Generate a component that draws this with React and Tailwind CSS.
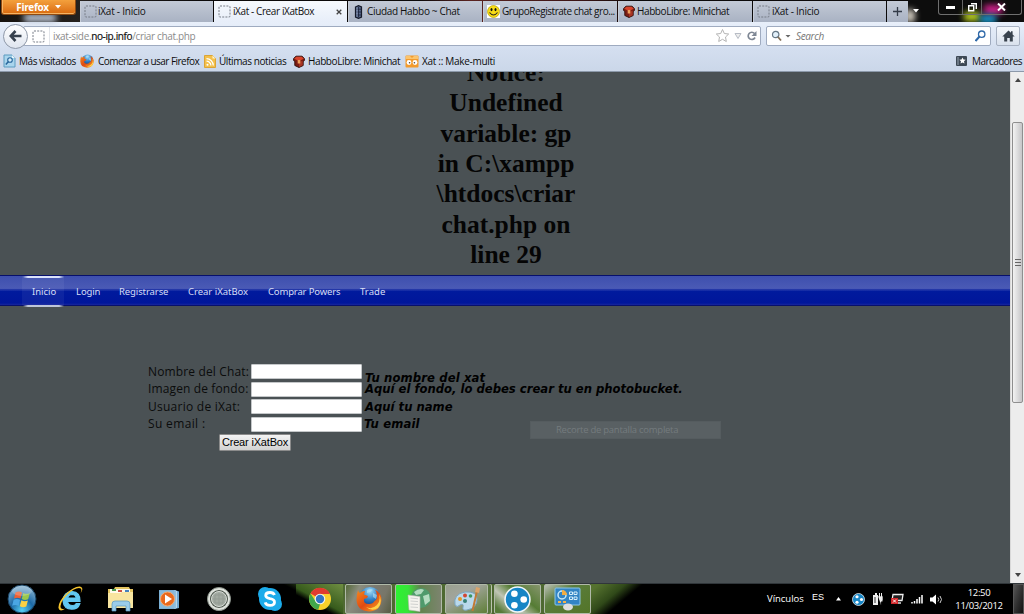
import React from "react";

const Blank = () => (
  <svg width="13" height="13" viewBox="0 0 13 13" className="shrink-0">
    <rect x="1" y="1" width="11" height="11" rx="1" fill="none" stroke="#777d87" strokeDasharray="2 1.2" />
  </svg>
);

const Cube = () => (
  <svg width="12" height="13" viewBox="0 0 12 13" className="shrink-0">
    <path d="M.6 3.500 3 1.200h6l2.400 2.300v2l-1.200 1v4L6 12.500l-4.200-2v-4L.6 5.500z" fill="#7c1d14" stroke="#2b0a06" strokeWidth=".9" />
    <path d="M1.200 3.700 3.300 1.800h5.400l2.100 1.900L6 6z" fill="#d8452c" />
    <path d="M6 6.500v5.500l3.700-1.800V6z" fill="#a83524" />
    <path d="M4.700 5h2.600v3.500H4.700z" fill="#f0a05a" />
  </svg>
);

const Rook = () => (
  <svg width="9" height="14" viewBox="0 0 9 14" className="mx-[2px] shrink-0">
    <path d="M1.500 2 4.500.6 7.500 2v10l-3 1.4-3-1.4z" fill="#59698a" stroke="#161b2b" strokeWidth="1.2" />
    <path d="M2 4.2h5M2 7h5M2 10h5M4.500 2v10" stroke="#182038" strokeWidth=".8" />
    <path d="M3 2.500v9" stroke="#a9b8d4" strokeWidth=".7" />
  </svg>
);

const Smiley = () => (
  <svg width="13" height="13" viewBox="0 0 13 13" className="shrink-0">
    <path d="M0 0h13v13H0z" fill="#fff" />
    <circle cx="6.500" cy="6.500" r="6" fill="#f7dc16" stroke="#b9a000" strokeWidth=".7" />
    <ellipse cx="4.500" cy="4.600" rx="1" ry="1.600" fill="#111" />
    <ellipse cx="8.500" cy="4.600" rx="1" ry="1.600" fill="#111" />
    <path d="M2.500 7.500q4 5 8 0" fill="none" stroke="#222" strokeWidth="1.100" />
  </svg>
);

const Firefox = ({ className }) => (
  <svg viewBox="0 0 26 26" className={className}>
    <defs>
      <radialGradient id="globe" cx=".5" cy=".2" r=".8">
        <stop offset="0" stopColor="#9fdcf8" />
        <stop offset=".5" stopColor="#2f7fc6" />
        <stop offset="1" stopColor="#10336f" />
      </radialGradient>
      <linearGradient id="fox" x1="0" y1="0" x2="1" y2="1">
        <stop offset="0" stopColor="#f58a1c" />
        <stop offset=".5" stopColor="#df4a12" />
        <stop offset="1" stopColor="#f8ab25" />
      </linearGradient>
    </defs>
    <circle cx="14" cy="11.500" r="10.500" fill="url(#globe)" />
    <path d="M11 4q4-2 6 0l-3 2-3 1zM17 7l4 2-1 4-3-2z" fill="#b7e3f5" opacity=".6" />
    <path d="M2 4q.5 2.500 2 3 2-2.300 5-2l-1 3.500 4 1.500-1 2-3 1q-1 5 5 5 4 0 5.500-3 2.500-1 2.500-5 0-4-2-6.500Q25.500 7 25.500 14 24.500 25 13 25.500 1 24.500.5 14 .7 8 2 4z" fill="url(#fox)" />
    <path d="M23 8q2 7-2 11-5 5-11 2 6 5 12 1 5-6 1-14z" fill="#ffd247" />
  </svg>
);

const Visited = () => (
  <svg width="13" height="14" viewBox="0 0 13 14" className="shrink-0">
    <path d="M1 1h8l3 3v9H1z" fill="#a9d5ed" stroke="#5a9bc0" />
    <path d="M9 1v3h3" fill="#e7f5fc" />
    <circle cx="7" cy="6" r="2.300" fill="#d4edfa" stroke="#28669c" strokeWidth="1.1" />
    <path d="m5.300 7.800-2.500 2.700" stroke="#28669c" strokeWidth="1.500" />
  </svg>
);

const Rss = () => (
  <svg width="12" height="13" viewBox="0 0 12 13" className="shrink-0">
    <path d="M.5.5h8l3 3v9H.5z" fill="#f3c04c" stroke="#dba436" />
    <path d="M8.500.5v3h3" fill="#fff3cc" />
    <circle cx="3.500" cy="9.700" r="1" fill="#fff" />
    <path d="M2.500 6.200a4.400 4.400 0 0 1 4.400 4.400M2.500 3.700a7 7 0 0 1 6.800 6.900" fill="none" stroke="#fff" strokeWidth="1.200" />
  </svg>
);

const XatFace = () => (
  <svg width="14" height="13" viewBox="0 0 14 13" className="shrink-0">
    <rect x=".5" y=".5" width="13" height="12" rx="1" fill="#f39b2d" />
    <path d="M1 1h4l2 2 2-2h4v3H1z" fill="#fbc46d" />
    <circle cx="4" cy="7.500" r="2.400" fill="#fff" />
    <circle cx="10" cy="7.500" r="2.400" fill="#fff" />
    <circle cx="4.600" cy="7.700" r=".8" fill="#543" />
    <circle cx="9.400" cy="7.700" r=".8" fill="#543" />
  </svg>
);

const tabs = [
  { icon: <Blank />, label: "iXat - Inicio", w: "w-[134px]", t: "tracking-[-0.23px]", g: "gap-[1px] pl-[3px]" },
  { icon: <Blank />, label: "iXat - Crear iXatBox", w: "w-[134px]", active: true, t: "tracking-[-0.4px]", g: "gap-[2px] pl-[4px]" },
  { icon: <Rook />, label: "Ciudad Habbo ~ Chat", w: "w-[135px]", t: "tracking-[-0.33px]", g: "gap-[2px] pl-[3px]" },
  { icon: <Smiley />, label: "GrupoRegistrate chat gro...", w: "w-[135px]", t: "tracking-[-0.46px]", g: "gap-[2px] pl-[3px]" },
  { icon: <Cube />, label: "HabboLibre: Minichat", w: "w-[135px]", t: "tracking-[-0.4px]", g: "gap-[2px] pl-[4px]" },
  { icon: <Blank />, label: "iXat - Inicio", w: "w-[134px]", t: "tracking-[-0.26px]", g: "gap-[2px] pl-[3px]" },
];

function TabStrip() {
  return (
    <div className="flex h-[22px] bg-[#0b0909] bg-[linear-gradient(90deg,#17130f_0px,#26221f_80px,#0b0909_200px,#0b0909_420px,#5a2320_470px,#3a1414_580px,#0b0909_640px)]">
      <div className="relative w-[80px]">
        <div className="absolute left-[24px] top-[14px] h-[8px] w-[32px] bg-[#bdc7d8] blur-[3px]" />
        <div className="relative ml-[1px] flex h-[15px] w-[75px] items-center justify-center gap-[6px] rounded-b-[3px] border border-t-0 border-[#8f4a11] bg-linear-to-b from-[#f3a03c] to-[#d96a0b] pb-[1px] font-bold text-white shadow-[inset_0_-1px_0_#f6b565,inset_1px_0_0_#f6b565]">
          <span className="text-[10px] leading-none tracking-[-0.35px]">Firefox</span>
          <svg width="6" height="4"><path d="M0 0h6L3 3.500z" fill="#fff" /></svg>
        </div>
      </div>
      {tabs.map((t, i) => (
        <div key={i} className={`${t.w} flex shrink-0 pr-[1px] pt-[1px]`}>
          <div
            className={`${t.g} flex min-w-0 flex-1 items-center ${
              t.active ? "bg-linear-to-b from-[#f6f9fd] to-[#e7eef9]" : "border-l border-[#c8ced8] bg-linear-to-b from-[#c3cad6] to-[#a9b2c3]"
            }`}
          >
            {t.icon}
            <span className={`${t.t} whitespace-nowrap text-[10px] text-[#101010]`}>{t.label}</span>
            {t.active && (
              <svg width="6" height="6" className="ml-auto mr-[5px]"><path d="m.7.7 4.600 4.600m0-4.600L.7 5.300" stroke="#444" strokeWidth="1.300" /></svg>
            )}
          </div>
        </div>
      ))}
      <div className="mt-[1px] grid h-[21px] w-[21px] place-items-center bg-linear-to-b from-[#c3cad6] to-[#a9b2c3]">
        <svg width="9" height="9"><path d="M4.500 0v9M0 4.500h9" stroke="#333b48" strokeWidth="1.300" /></svg>
      </div>
      <div className="relative flex flex-1 overflow-hidden bg-[#0d0d0d]">
        <div className="absolute left-[-3px] top-[9px] h-[14px] w-[10px] rounded-full bg-[#d8d2c6] blur-[3px]" />
        <svg width="6" height="4" className="relative ml-[5px] mt-[9px]"><path d="M0 0h6L3 3.500z" fill="#fff" /></svg>
        <div className="absolute left-[56px] top-[12px] h-[9px] w-[16px] bg-[#bcd321] blur-[3px]" />
        <div className="absolute left-[76px] top-[5px] h-[9px] w-[18px] bg-[#d6208e] blur-[3px]" />
        <div className="absolute left-[72px] top-[15px] h-[8px] w-[16px] bg-[#189bd2] blur-[3px]" />
        <div className="relative ml-[19px] flex h-[15px] w-[84px] rounded-b-[3px] border border-t-0 border-[#6f6f6f]">
          <div className="flex w-[24px] items-center justify-center border-r border-[#666]"><span className="h-[3px] w-[9px] bg-white" /></div>
          <div className="grid w-[19px] place-items-center border-r border-[#666]">
            <svg width="9" height="9"><path d="M3 .7h5.300V6M.7 2.700h5v5h-5z" fill="none" stroke="#fff" strokeWidth="1.400" /></svg>
          </div>
          <div className="grid flex-1 place-items-center"><svg width="9" height="8"><path d="m1 .5 7 7m0-7-7 7" stroke="#fff" strokeWidth="2" /></svg></div>
        </div>
      </div>
    </div>
  );
}

function NavBar() {
  return (
    <div className="flex h-[28px] items-center bg-linear-to-b from-[#e8effa] to-[#d3deef]">
      <div className="z-10 ml-[3px] grid h-[25px] w-[25px] shrink-0 place-items-center rounded-full border border-[#8e98a8] bg-linear-to-b from-white to-[#dfe5ef]">
        <svg width="13" height="12" viewBox="0 0 13 12"><path d="M6.500 1 1.800 6l4.700 5M2 6h10.500" fill="none" stroke="#37414e" strokeWidth="2.600" /></svg>
      </div>
      <div className="ml-[-5px] flex h-[20px] w-[738px] items-center rounded-[2px] border border-[#9fabc0] bg-white">
        <div className="flex h-full w-[26px] items-center border-r border-[#e2e5ea] pl-[8px]"><Blank /></div>
        <div className="ml-[3px] flex-1 whitespace-pre text-[10px] tracking-[-0.36px] text-[#8b8b8b]">
          ixat-side.<span className="text-[#111] [-webkit-text-stroke:0.2px_#111]">no-ip.info</span>/criar chat.php
        </div>
        <svg width="46" height="16" viewBox="0 0 46 16" className="mr-[-1px]">
          <path d="m7.500 1.500 1.800 4 4.400.5-3.200 3 .8 4.500-3.800-2.200L3.700 13.500l.8-4.500-3.200-3 4.400-.5z" fill="#fff" stroke="#b4b4b4" />
          <path d="M20 5.500h6l-3 5z" fill="#eee" stroke="#b7bcc5" />
          <path d="M39.500 5.500a3.600 3.600 0 1 0 .5 4" fill="none" stroke="#7e8794" strokeWidth="1.700" />
          <path d="M41.500 3v5h-5z" fill="#7e8794" />
        </svg>
      </div>
      <div className="ml-[5px] flex h-[20px] w-[225px] items-center rounded-[2px] border border-[#9fabc0] bg-white px-[4px]">
        <svg width="20" height="12" viewBox="0 0 20 12">
          <circle cx="4.700" cy="4.500" r="3.200" fill="#e2f0fa" stroke="#667786" strokeWidth="1.200" />
          <path d="m7 7 3 3.500" stroke="#806d56" strokeWidth="1.800" />
          <path d="M14.500 5h5L17 7.500z" fill="#666" />
        </svg>
        <span className="ml-[5px] flex-1 text-[10px] italic tracking-[-0.35px] text-[#777]">Search</span>
        <svg width="11" height="12" viewBox="0 0 11 12">
          <circle cx="6.700" cy="4.200" r="3.200" fill="none" stroke="#2e68a8" strokeWidth="1.300" />
          <path d="m4.500 6.500-4 4.500" stroke="#2e68a8" strokeWidth="2" />
        </svg>
      </div>
      <div className="ml-[5px] grid h-[20px] w-[24px] place-items-center rounded-[2px] border border-[#a7b1c2] bg-linear-to-b from-[#f5f8fc] to-[#d9e1ed]">
        <svg width="13" height="12" viewBox="0 0 13 12"><path d="M6.500.5.3 6.500h1.900v5h3V8h2.600v3.500h3v-5h1.900L10.600 4.400V1.300H9v1.500z" fill="#38424d" /></svg>
      </div>
    </div>
  );
}

const marks = [
  { icon: <Visited />, label: "Más visitados", w: "w-[77px]", t: "tracking-[-0.46px]", g: "gap-[3px]" },
  { icon: <Firefox className="h-[14px] w-[14px] shrink-0" />, label: "Comenzar a usar Firefox", w: "w-[124px]", t: "tracking-[-0.54px]", g: "gap-[4px]" },
  { icon: <Rss />, label: "Últimas noticias", w: "w-[89px]", t: "tracking-[-0.42px]", g: "gap-[3px]" },
  { icon: <Cube />, label: "HabboLibre: Minichat", w: "w-[112px]", t: "tracking-[-0.4px]", g: "gap-[3px]" },
  { icon: <XatFace />, label: "Xat :: Make-multi", w: "w-[100px]", t: "tracking-[-0.29px]", g: "gap-[3px]" },
];

function Bookmarks() {
  return (
    <div className="flex h-[22px] items-center border-b border-[#8c99aa] bg-linear-to-b from-[#d3deef] to-[#cbd7e9] pl-[3px] pt-[1px] text-[10px] text-[#0b0b0b]">
      {marks.map((m) => (
        <div key={m.label} className={`${m.w} ${m.g} flex shrink-0 items-center whitespace-nowrap`}>
          {m.icon}
          <span className={m.t}>{m.label}</span>
        </div>
      ))}
      <div className="ml-auto flex w-[68px] shrink-0 items-center gap-[5px] whitespace-nowrap">
        <svg width="11" height="10" viewBox="0 0 11 10" className="shrink-0">
          <rect width="11" height="10" rx="1" fill="#3d4854" />
          <path d="M2 1v8" stroke="#9aa6b3" />
          <path d="m6.500 1.500 1 2 2.200.2-1.700 1.600.5 2.300-2-1.200-2 1.200.5-2.300-1.700-1.600 2.200-.2z" fill="#fff" />
        </svg>
        <span className="tracking-[-0.55px]">Marcadores</span>
      </div>
    </div>
  );
}

const menu = [
  ["Login", "w-[43px]", "tracking-[-0.1px]"],
  ["Registrarse", "w-[69px]", "tracking-[-0.1px]"],
  ["Crear iXatBox", "w-[80px]", "tracking-[-0.02px]"],
  ["Comprar Powers", "w-[92px]", "tracking-[-0.16px]"],
  ["Trade", "w-[40px]", "tracking-[0.05px]"],
];

const fields = [
  ["Nombre del Chat:", "tracking-[0.14px]", "Tu nombre del xat", "pl-[3px] pt-[12px] tracking-[0.12px]"],
  ["Imagen de fondo:", "tracking-[0.13px]", "Aquí el fondo, lo debes crear tu en photobucket.", "pl-[3px]"],
  ["Usuario de iXat:", "tracking-[0.26px]", "Aquí tu name", "pl-[3px]"],
  ["Su email :", "tracking-[0.35px]", "Tu email", "pl-[2px] tracking-[0.15px]"],
];

function Page() {
  return (
    <div className="flex h-[511px] bg-[#4a5154]">
      <div className="min-w-0 flex-1 overflow-hidden">
        <div className="h-[203px] overflow-hidden">
          <h1 className="ml-[426px] mt-[-14px] w-[160px] text-center font-['Liberation_Serif',serif] text-[25.500px] font-bold leading-[30.350px] text-[#050505]">
            Notice:<br />Undefined<br />variable: gp<br />in C:\xampp<br />\htdocs\criar<br />chat.php on<br />line 29
          </h1>
        </div>
        <nav className="flex h-[31px] border-y border-[#07106c] bg-[linear-gradient(#3e4fae_0px,#4a5ab5_12px,#4555b5_13px,#1c2fa0_13px,#2b3fae_14px,#001a9d_15px,#00169a_27px,#17269c_29px)] pl-[22px] font-['Noto_Sans',sans-serif] text-[9.500px] leading-[31px] text-[#d7def5]">
          <div className="relative mr-[12px] w-[42px] pl-[10px]">
            <div className="absolute inset-0 bg-white/5" />
            <div className="absolute left-[1px] top-0 h-[2px] w-[41px] bg-[linear-gradient(90deg,transparent,#dbe2fb_12%,#dbe2fb_88%,transparent)]" />
            <div className="absolute bottom-[-2px] left-[1px] h-[2px] w-[41px] bg-[linear-gradient(90deg,transparent,#bfc6d9_12%,#bfc6d9_88%,transparent)]" />
            <span className="relative">Inicio</span>
          </div>
          {menu.map(([m, w, t]) => <div key={m} className={`${w} ${t} shrink-0 whitespace-nowrap`}>{m}</div>)}
        </nav>
        <div className="mt-[57px] flex pl-[148px]">
          <form className="flex w-[560px] flex-col">
            {fields.map(([l, t, hint, p]) => (
              <div key={l} className="flex h-[17.500px] items-center text-black">
                <label className={`${t} w-[103px] shrink-0 whitespace-nowrap text-[12px] text-[#0b0c0c]`}>{l}</label>
                <input className="h-[15px] w-[111px] shrink-0 rounded-[1px] border border-[#c4c7c9] bg-white" />
                <span className={`${p} whitespace-nowrap font-['DejaVu_Sans',sans-serif] text-[11.620px] font-bold italic leading-[14px]`}>{hint}</span>
              </div>
            ))}
            <button type="button" className="ml-[71px] mt-[1px] h-[17px] w-[72px] whitespace-nowrap rounded-[1px] border border-[#8b8b8b] bg-linear-to-b from-[#f3f3f3] to-[#d2d2d2] font-['Liberation_Sans',sans-serif] text-[11px] leading-none tracking-[-0.18px] text-black">Crear iXatBox</button>
          </form>
        </div>
        <div className="ml-[530px] mt-[-30px] h-[18px] w-[191px] border border-[#555c5f] bg-[#596063] pl-[25px] text-[9.500px] leading-[16px] tracking-[-0.26px] text-[#747b7e]">Recorte de pantalla completa</div>
      </div>
      <div className="flex w-[14px] flex-col items-center border-l border-[#d9d9d9] bg-[#ededed]">
        <svg width="6" height="4" className="mt-[6px]"><path d="M3 0 6 4H0z" fill="#444" /></svg>
        <div className="mt-[40px] grid h-[281px] w-[11px] place-items-center rounded-[2px] border border-[#8f8f8f] bg-linear-to-r from-[#f3f3f3] to-[#c6c6c8]">
          <svg width="6" height="7"><path d="M0 .5h6M0 3.500h6M0 6.500h6" stroke="#666" /></svg>
        </div>
        <svg width="6" height="4" className="mb-[6px] mt-auto"><path d="M0 0h6L3 4z" fill="#444" /></svg>
      </div>
    </div>
  );
}

const Start = () => (
  <svg width="32" height="30" viewBox="0 0 32 30">
    <defs>
      <radialGradient id="orb" cx=".5" cy=".9" r=".9"><stop offset="0" stopColor="#56cff4" /><stop offset=".45" stopColor="#1c68a5" /><stop offset="1" stopColor="#91b9d4" /></radialGradient>
    </defs>
    <circle cx="16" cy="15" r="14" fill="url(#orb)" stroke="#18405f" />
    <path d="M9.500 8.500q3.500-2 6.500 0l-1.500 6q-3-1.700-6.500 0z" fill="#ee6032" />
    <path d="M17.300 9q3.200 1.700 6.500 0l-1.600 6.200q-3.200 1.500-6.500-.2z" fill="#9ac74a" />
    <path d="M7.600 15.800q3.400-1.800 6.500 0L12.600 22q-3-1.800-6.500-.2z" fill="#4aa6e4" />
    <path d="M15.400 16.300q3.200 1.700 6.500.1L20.300 22.500q-3.200 1.700-6.500-.2z" fill="#fbd043" />
    <ellipse cx="16" cy="7" rx="10" ry="5" fill="#fff" opacity=".22" />
  </svg>
);
const IE = () => (
  <svg width="26" height="26" viewBox="0 0 26 26">
    <path d="M22 15.500H9.500q.8 4 5 4 2.500 0 3.600-1.800h3.700q-1.800 5.500-8 5.500-8 0-8.800-8.500Q5.500 6 14 5.500q8.500.5 8 10zM9.700 12h8.500q-.5-3.400-4-3.500-3.800 0-4.500 3.500z" fill="#62c8f2" stroke="#62c8f2" strokeWidth="1.200" />
    <path d="M22.500 7.500Q25 2 21 2 16 2 9 9q-6 6-6.500 11-.2 4.500 5 2.500-6 4-7-.5Q0 16 8 8q8-8 14-7.500 4.500 1 .5 7z" fill="#f7c52e" />
  </svg>
);
const Folder = () => (
  <svg width="27" height="26" viewBox="0 0 27 26">
    <path d="M1 3h6l1-2h14l1 2h3v19H1z" fill="#e4c461" />
    <path d="M3 3h20v5H3z" fill="#fffbe9" /><path d="M5 3h4v2H5z" fill="#4b9f4e" /><path d="M11 4h4v2h-4z" fill="#ce5144" /><path d="M18 4h4v2h-4z" fill="#4681bc" />
    <path d="M1 7h12l2-1h11v16H1z" fill="#f8e5a0" />
    <path d="M5 25v-7q0-3 3-3h12q3 0 3 3v7h-4v-5H9v5z" fill="#9bcdea" stroke="#5696bd" strokeWidth=".7" />
  </svg>
);
const Player = () => (
  <svg width="22" height="22" viewBox="0 0 22 22">
    <path d="M1 2h16l4 1.500V20l-4 1H1z" fill="#6fa7cf" /><path d="M17 2v19M18.500 3v17" stroke="#b7d8ec" /><path d="M1.500 2.500h15v18h-15z" fill="#88b9da" />
    <circle cx="9.500" cy="11" r="7" fill="#e9691d" stroke="#f7a96d" /><path d="m7 6.500 7 4.500-7 4.500z" fill="#fff" />
  </svg>
);
const Ring = () => (
  <svg width="26" height="26" viewBox="0 0 26 26">
    <circle cx="13" cy="13" r="11.500" fill="#dfe3dd" stroke="#8b938b" /><circle cx="13" cy="13" r="9" fill="#4d574d" /><circle cx="13" cy="13" r="7.500" fill="#a2aaa1" stroke="#d7dcd6" />
    <path d="M9 9h8v8H9zM13 7v12M7 13h12" fill="none" stroke="#939b93" />
  </svg>
);
const Skype = () => (
  <svg width="26" height="26" viewBox="0 0 26 26">
    <circle cx="8" cy="8" r="7" fill="#1cabea" /><circle cx="18" cy="18" r="7" fill="#1cabea" /><circle cx="13" cy="13" r="11" fill="#1cabea" />
    <path d="M17.500 9q-1-2.500-4.500-2.500-4.300 0-4.300 3 0 2.300 4.300 3.200 4.500.8 4.500 3.500 0 3-4.500 3.200-4 0-4.800-3" fill="none" stroke="#fff" strokeWidth="2.800" />
  </svg>
);
const Chrome = () => (
  <svg width="24" height="24" viewBox="0 0 24 24">
    <circle cx="12" cy="12" r="11" fill="#f9d12b" />
    <path d="M12 12 2.500 6.500A11 11 0 0 1 22 7H12z" fill="#df3b30" />
    <path d="m2.500 6.500 5.200 8 4.500 2-2 6.300A11 11 0 0 1 2.500 6.500z" fill="#41a64b" />
    <circle cx="12" cy="12" r="5.300" fill="#f3f4ee" /><circle cx="12" cy="12" r="4.200" fill="#3275c4" />
  </svg>
);
const Globe = () => (
  <svg width="27" height="27" viewBox="0 0 27 27">
    <circle cx="16" cy="12" r="10" fill="#4f9a6c" /><path d="M9 6q6-5 10-2l-3 4-5 1zM18 10l6-2 1 7-5 4z" fill="#b4dcc0" />
    <path d="m3 9 12 1.500V25.500L4 24z" fill="#f5f3ee" stroke="#b7b7ae" strokeWidth=".6" /><path d="m5.500 12 7.500.8M5.500 15l7.500.6M5.500 18l7.500.5M5.500 21l7.500.5" stroke="#d0d1cf" />
  </svg>
);
const Paint = () => (
  <svg width="28" height="26" viewBox="0 0 28 26">
    <path d="M2 19Q0 8 12 6q12-1 12 7 0 9-10 11-5 1-4-3 1-4-3-2-3 3-5 0z" fill="#b9d9ec" stroke="#7ba5bf" />
    <circle cx="7" cy="13" r="2" fill="#e39a2a" /><circle cx="12" cy="9.500" r="2" fill="#d14735" /><circle cx="17.500" cy="10" r="1.800" fill="#3c9662" /><circle cx="12" cy="15" r="2" fill="#378076" />
    <path d="M24 5 19.500 25" stroke="#c27a35" strokeWidth="2" /><path d="m22 6 1-5 4 1-1 5z" fill="#d9a36c" />
  </svg>
);
const Dots = ({ className }) => (
  <svg viewBox="0 0 26 26" className={className}>
    <circle cx="13" cy="13" r="12" fill="#1685c5" stroke="#f1f7fb" strokeWidth="1.500" />
    <circle cx="10" cy="7.500" r="3.200" fill="#fff" /><circle cx="19" cy="13" r="3.200" fill="#fff" /><circle cx="10" cy="18.500" r="3.200" fill="#fff" />
  </svg>
);
const Panel = () => (
  <svg width="27" height="24" viewBox="0 0 27 24">
    <rect x="1" y="1" width="25" height="17" rx="1" fill="#3284c4" stroke="#8bc5e8" />
    <circle cx="8" cy="8" r="4" fill="none" stroke="#c6e9fa" strokeWidth="1.500" /><path d="M8 8V3a5 5 0 0 1 5 5z" fill="#f2ac43" />
    <path d="M15.500 5h3v2.500h-3zM20 5h3v2.500h-3zM15.500 10h3v2.500h-3zM20 10h3v2.500h-3z" fill="none" stroke="#d6effb" /><path d="M4 15h3M9 15h3" stroke="#f4b24b" strokeWidth="2" />
    <ellipse cx="14" cy="20" rx="5" ry="3.500" fill="#dedede" />
  </svg>
);

const pinned = [
  [<Start />, "w-[43px]"], [<IE />, "w-[56px]"], [<Folder />, "w-[43px]"], [<Player />, "w-[53px]"], [<Ring />, "w-[48px]"], [<Skype />, "w-[53px]"], [<Chrome />, "w-[47px]"],
];
const running = [
  [<Firefox className="h-[26px] w-[26px]" />, "w-[47px] mr-[3px] bg-[linear-gradient(115deg,#55693a,#8a8d7e_25%,#7b7a70_50%,#777669_75%,#565b42)]"],
  [<Globe />, "w-[47px] mr-[3px] bg-[linear-gradient(90deg,#2cf331_0px,#37e439_12px,#61844e_24px,#7e8470_46px)]"],
  [<Paint />, "w-[43px] mr-[6px] shadow-[3px_0_0_#58753d,4px_0_0_#bac3ae] bg-[linear-gradient(150deg,#9aa08f,#a2a59c_35%,#5f7f38)]"],
  [<Dots className="h-[27px] w-[27px]" />, "w-[47px] mr-[3px] bg-[linear-gradient(40deg,#567a38_10%,#c0c5b5_35%,#557c34_60%,#86956d)]"],
  [<Panel />, "w-[47px] bg-[linear-gradient(145deg,#bac0b5_0%,#5a7c3b_35%,#537528)]"],
];

function Taskbar() {
  return (
    <div className="flex h-[31px] border-t border-[#30363a] bg-black">
      {pinned.map(([ic, w], i) => (
        <div key={i} className={`${w} flex shrink-0 items-center justify-center ${i === 6 ? "bg-[linear-gradient(28deg,#000_35%,#375b1c_48%,#6f8e42)]" : i === 5 ? "bg-[linear-gradient(28deg,#000_88%,#1c2b10)]" : ""}`}>{ic}</div>
      ))}
      <div className="flex shrink-0 bg-[#4e6931] pl-[2px]">
        {running.map(([ic, w], i) => (
          <div key={i} className={`${w} flex shrink-0 items-center justify-center rounded-[2px] border border-[#b0b9a8]`}>{ic}</div>
        ))}
      </div>
      <div className="w-[64px] bg-[linear-gradient(140deg,#55722f_8%,#304919_35%,#000_52%)]" />
      <div className="ml-auto flex items-center text-white">
        <span className="w-[45px] whitespace-nowrap text-[9.500px] tracking-[-0.02px]">Vínculos</span>
        <span className="w-[24px] pb-[3px] font-['Liberation_Sans',sans-serif] text-[9px]">ES</span>
        <svg width="5" height="4"><path d="M2.500 0 5 3.500H0z" fill="#fff" /></svg>
        <Dots className="ml-[11px] h-[13px] w-[13px]" />
        <svg width="11" height="13" viewBox="0 0 11 13" className="ml-[7px]"><path d="M1 2h5v10H1zM3 0h2v2H3z" fill="#eee" /><path d="M3 4v6" stroke="#333" /><path d="M6 3h5v4q0 2-2 2v3" fill="#eee" stroke="#222" strokeWidth=".7" /><path d="M7.500 0v4M9.500 0v4" stroke="#eee" /></svg>
        <svg width="13" height="12" viewBox="0 0 13 12" className="ml-[8px]"><path d="M2 1.500h10l-1 6H1z" fill="#222" stroke="#eee" strokeWidth="1.300" /><path d="M4 10h6" stroke="#ddd" strokeWidth="1.500" /><rect y="5" width="7" height="6" fill="#d3272a" /><path d="m2 6.500 3 3m0-3-3 3" stroke="#fff" /></svg>
        <svg width="12" height="9" viewBox="0 0 12 9" className="ml-[7px]"><path d="M1 8.500V7M3.500 8.500V6M6 8.500V4M8.500 8.500V2M11 8.500V0" stroke="#fff" strokeWidth="1.500" /></svg>
        <svg width="13" height="11" viewBox="0 0 13 11" className="ml-[7px]"><path d="M0 3.500h2.500L6 .5v10l-3.500-3H0z" fill="#fff" /><path d="M8 3.500q1.500 2 0 4M10 2q3 3.500 0 7" fill="none" stroke="#ccc" /></svg>
        <div className="ml-[11px] mr-[9px] flex w-[50px] flex-col items-center whitespace-nowrap text-[9.500px] leading-[13px] tracking-[-0.3px]">
          <span>12:50</span><span>11/03/2012</span>
        </div>
        <div className="h-[30px] w-[11px] border border-[#555] bg-linear-to-br from-[#555] to-[#111]" />
      </div>
    </div>
  );
}

export default function App() {
  return (
    <div className="flex h-[614px] w-[1024px] flex-col overflow-hidden bg-black font-['Open_Sans','Noto_Sans',sans-serif]">
      <TabStrip />
      <NavBar />
      <Bookmarks />
      <Page />
      <Taskbar />
    </div>
  );
}
